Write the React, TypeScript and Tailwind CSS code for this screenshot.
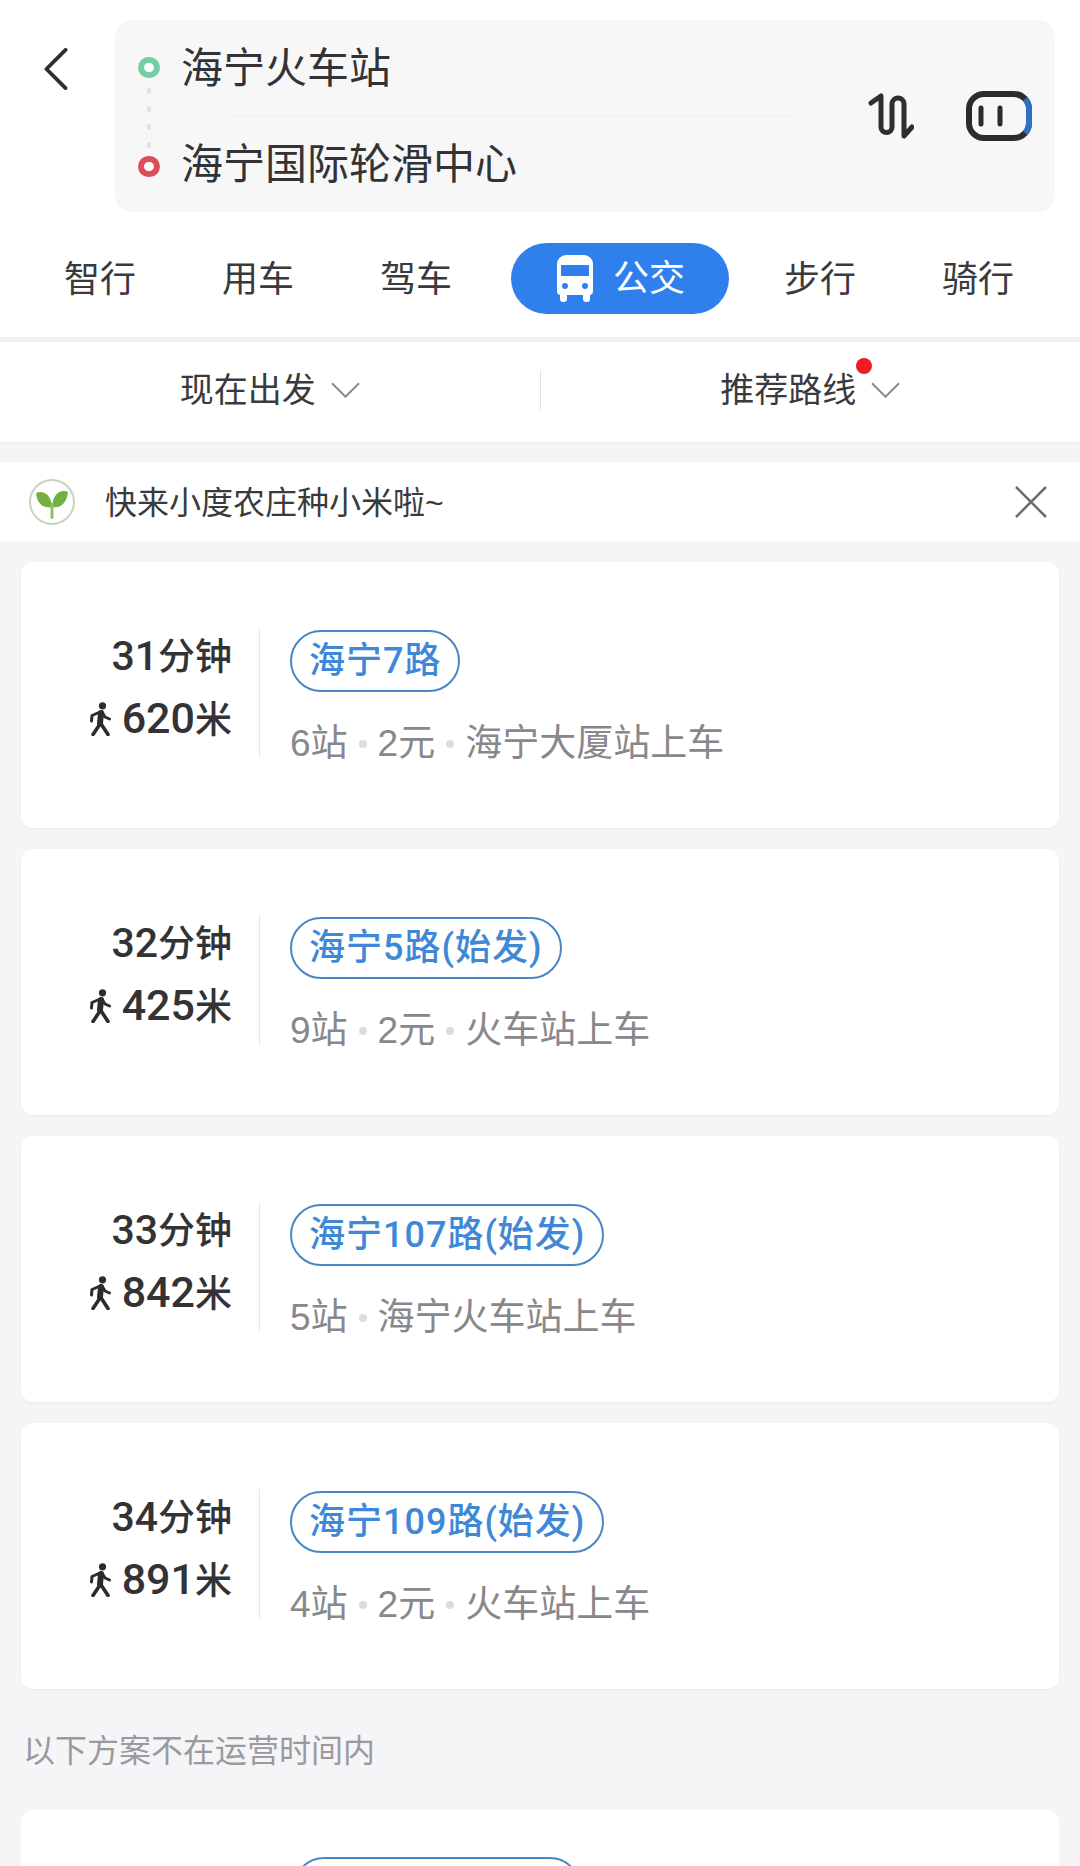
const tabs = ['智行', '用车', '驾车', '公交', '步行', '骑行'];

const routes = [
  { mins: '31', dist: '620', line: '海宁7路', info: ['6站', '2元', '海宁大厦站上车'] },
  { mins: '32', dist: '425', line: '海宁5路(始发)', info: ['9站', '2元', '火车站上车'] },
  { mins: '33', dist: '842', line: '海宁107路(始发)', info: ['5站', '海宁火车站上车'] },
  { mins: '34', dist: '891', line: '海宁109路(始发)', info: ['4站', '2元', '火车站上车'] },
];

function BusIcon() {
  return (
    <svg viewBox="0 0 36 47" className="w-[36px] h-[47px]">
      <path d="M9 0h18a9 9 0 0 1 9 9v27a4 4 0 0 1-4 4H4a4 4 0 0 1-4-4V9a9 9 0 0 1 9-9z" fill="#fff" />
      <rect x="4" y="10" width="28" height="11" fill="#2f80ed" />
      <circle cx="8" cy="31" r="3" fill="#2f80ed" />
      <circle cx="28" cy="31" r="3" fill="#2f80ed" />
      <rect x="3" y="36" width="7" height="11" rx="3" fill="#fff" />
      <rect x="26" y="36" width="7" height="11" rx="3" fill="#fff" />
    </svg>
  );
}

function Chevron() {
  return (
    <svg viewBox="0 0 30 16" className="w-[29px] h-[16px]" fill="none" stroke="#8a8a8e" strokeWidth="2">
      <path d="M1 1l14 14L29 1" />
    </svg>
  );
}

function Sprout() {
  return (
    <svg viewBox="0 0 46 46" className="w-[46px] h-[46px]">
      <circle cx="23" cy="23" r="22" fill="#fff" stroke="#c6d4bd" strokeWidth="2" />
      <path d="M7 14c7-3 15 1 16 14C14 30 8 24 7 14z" fill="#72b043" />
      <path d="M39 13c-7-3-15 1-16 15 9 2 15-5 16-15z" fill="#72b043" />
      <rect x="21.5" y="24" width="3" height="16" rx="1.5" fill="#8dbf66" />
    </svg>
  );
}

function Walker() {
  return (
    <svg viewBox="0 0 22 34" className="w-[22px] h-[34px]" fill="none" stroke="#2c2c2e" strokeLinecap="round" strokeLinejoin="round">
      <circle cx="13.5" cy="3.8" r="3.6" fill="#2c2c2e" stroke="none" />
      <path d="M12 11l-1 10" strokeWidth="6" />
      <path d="M11 22L4 32.5M11.5 21l7.5 11.5" strokeWidth="3.6" />
      <path d="M11 10L3 13.5 2.5 19M13 10l3 5 4.5 2" strokeWidth="3" />
    </svg>
  );
}

function RouteCard({ route }: { route: (typeof routes)[number] }) {
  return (
    <div className="h-[266px] rounded-xl bg-white flex items-center pl-[29px] shadow-[0_1px_3px_rgba(0,0,0,0.04)]">
      <div className="w-[182px] mb-[14px] flex flex-col items-end gap-[16px] font-['Roboto','Noto_Sans_CJK_SC',sans-serif] font-medium text-[#333336] text-[37px] leading-[44px]">
        <div>
          <span className="text-[41px]">{route.mins}</span>分钟
        </div>
        <div className="flex items-center">
          <Walker />
          <span className="ml-[11px]">
            <span className="text-[43px]">{route.dist}</span>米
          </span>
        </div>
      </div>
      <div className="w-px h-[130px] mb-[5px] bg-[#e6e6e8] ml-[27px]" />
      <div className="ml-[30px] mt-[6px] flex flex-col items-start gap-[30px]">
        <div className="h-[62px] rounded-full border-2 border-[#4a86c5] px-[17px] flex items-center text-[36px] tracking-[1px] font-medium text-[#3f88d6] font-['Roboto','Noto_Sans_CJK_SC',sans-serif]">
          {route.line}
        </div>
        <div className="flex items-center text-[37px] leading-[44px] text-[#88888c]">
          {route.info.map((part, i) => (
            <div key={part} className="flex items-center">
              {i > 0 && <span className="w-[8px] h-[8px] rounded-full bg-[#dcdcde] mx-[11px]" />}
              {part}
            </div>
          ))}
        </div>
      </div>
    </div>
  );
}

export default function App() {
  return (
    <div className="w-[1080px] h-[1866px] overflow-hidden bg-[#f5f5f8] font-['Liberation_Sans','Noto_Sans_CJK_SC',sans-serif]">
      {/* search header */}
      <div className="bg-white h-[342px] pt-[20px] border-b-[5px] border-[#f1f1f3]">
        <div className="flex items-center">
          <div className="w-[115px] h-[192px] flex justify-center pt-[28px] pr-[3px]">
            <svg viewBox="0 0 26 44" className="w-[26px] h-[42px]" fill="none" stroke="#2f2f33" strokeWidth="4" strokeLinecap="round" strokeLinejoin="round">
              <path d="M23 2L3 22l20 20" />
            </svg>
          </div>
          <div className="w-[940px] h-[192px] rounded-2xl bg-[#f7f7f8] flex items-center">
            <div className="w-[66px] h-full flex flex-col items-center pl-[2px] pt-[37px]">
              <div className="w-[22px] h-[21px] rounded-full border-[6px] border-[#76cda3] bg-white" />
              <div className="flex flex-col gap-[12px] mt-[10px] mb-[8px]">
                <div className="w-[4px] h-[6px] rounded-full bg-[#e2e2e2]" />
                <div className="w-[4px] h-[6px] rounded-full bg-[#e2e2e2]" />
                <div className="w-[4px] h-[6px] rounded-full bg-[#e2e2e2]" />
                <div className="w-[4px] h-[6px] rounded-full bg-[#e2e2e2]" />
              </div>
              <div className="w-[22px] h-[21px] rounded-full border-[6px] border-[#dc4f57] bg-white" />
            </div>
            <div className="w-[610px] flex flex-col text-[42px] text-[#333336]">
              <div className="h-[96px] pt-[1px] flex items-center">海宁火车站</div>
              <div className="h-px ml-[47px] w-[565px] bg-[#eeeeef]" />
              <div className="h-[95px] flex items-center">海宁国际轮滑中心</div>
            </div>
            <div className="flex items-center ml-[77px] gap-[52px]">
              <svg viewBox="0 0 46 46" className="w-[46px] h-[46px]" fill="none" stroke="#2f2f33" strokeWidth="5" strokeLinecap="round" strokeLinejoin="round">
                <path d="M3 10l10-7v31a5.5 5.5 0 0 0 11 0V11a6 6 0 0 1 12 0v32l8-9" />
              </svg>
              <svg viewBox="0 0 66 50" className="w-[66px] h-[50px]" fill="none" strokeWidth="6">
                <rect x="3" y="3" width="60" height="44" rx="15" stroke="#2b2b30" />
                <path d="M15 17v16M34 17v16" stroke="#2b2b30" strokeWidth="5" strokeLinecap="round" />
                <path d="M59 8c3 3 4 6 4 10v14c0 4-1 7-4 10" stroke="#2f6fc4" />
              </svg>
            </div>
          </div>
        </div>
        {/* mode tabs */}
        <div className="flex items-center mt-[31px] pl-[21px] h-[71px] text-[36px] leading-[56px] text-[#3a3a3d]">
          {tabs.map(tab =>
            tab === '公交' ? (
              <div key={tab} className="w-[218px] h-[71px] ml-[16px] mr-[12px] rounded-full bg-[#2f80ed] flex items-center pl-[46px] gap-[20px] text-white">
                <BusIcon />
                <span className="pt-[1px]">{tab}</span>
              </div>
            ) : (
              <div key={tab} className="w-[158px] text-center pt-[2px]">{tab}</div>
            ),
          )}
        </div>
      </div>

      {/* filters */}
      <div className="h-[100px] bg-white flex items-center text-[34px] text-[#3a3a3d] shadow-[0_1px_2px_rgba(0,0,0,0.04)]">
        <div className="flex-1 flex items-center justify-center gap-[15px] pb-[4px]">
          现在出发
          <Chevron />
        </div>
        <div className="w-px h-[40px] mb-[4px] bg-[#e2e2e4]" />
        <div className="flex-1 flex items-center justify-center gap-[15px] pb-[4px]">
          <span className="relative">
            推荐路线
            <span className="absolute -right-[16px] -top-[7px] w-[16px] h-[16px] rounded-full bg-[#ee1c25]" />
          </span>
          <Chevron />
        </div>
      </div>

      {/* banner */}
      <div className="mt-[20px] h-[79px] bg-white flex items-center pl-[29px] pr-[33px] text-[32px] text-[#3a3a3d]">
        <Sprout />
        <div className="ml-[30px] flex-1 pt-[2px]">快来小度农庄种小米啦~</div>
        <svg viewBox="0 0 32 32" className="w-[32px] h-[32px]" fill="none" stroke="#6e6e72" strokeWidth="2.5">
          <path d="M1 1l30 30M31 1L1 31" />
        </svg>
      </div>

      {/* routes */}
      <div className="mt-[21px] mx-[21px] flex flex-col gap-[21px]">
        {routes.map(route => (
          <RouteCard key={route.mins} route={route} />
        ))}
      </div>
      <div className="pl-[23px] pt-[42px] pb-[40px] h-[121px] text-[32px] leading-[40px] text-[#9a9a9e]">
        以下方案不在运营时间内
      </div>
      <div className="mx-[21px] h-[120px] rounded-t-xl bg-white pt-[47px] pl-[272px]">
        <div className="w-[288px] h-[62px] rounded-full border-2 border-[#4a86c5]" />
      </div>
    </div>
  );
}
